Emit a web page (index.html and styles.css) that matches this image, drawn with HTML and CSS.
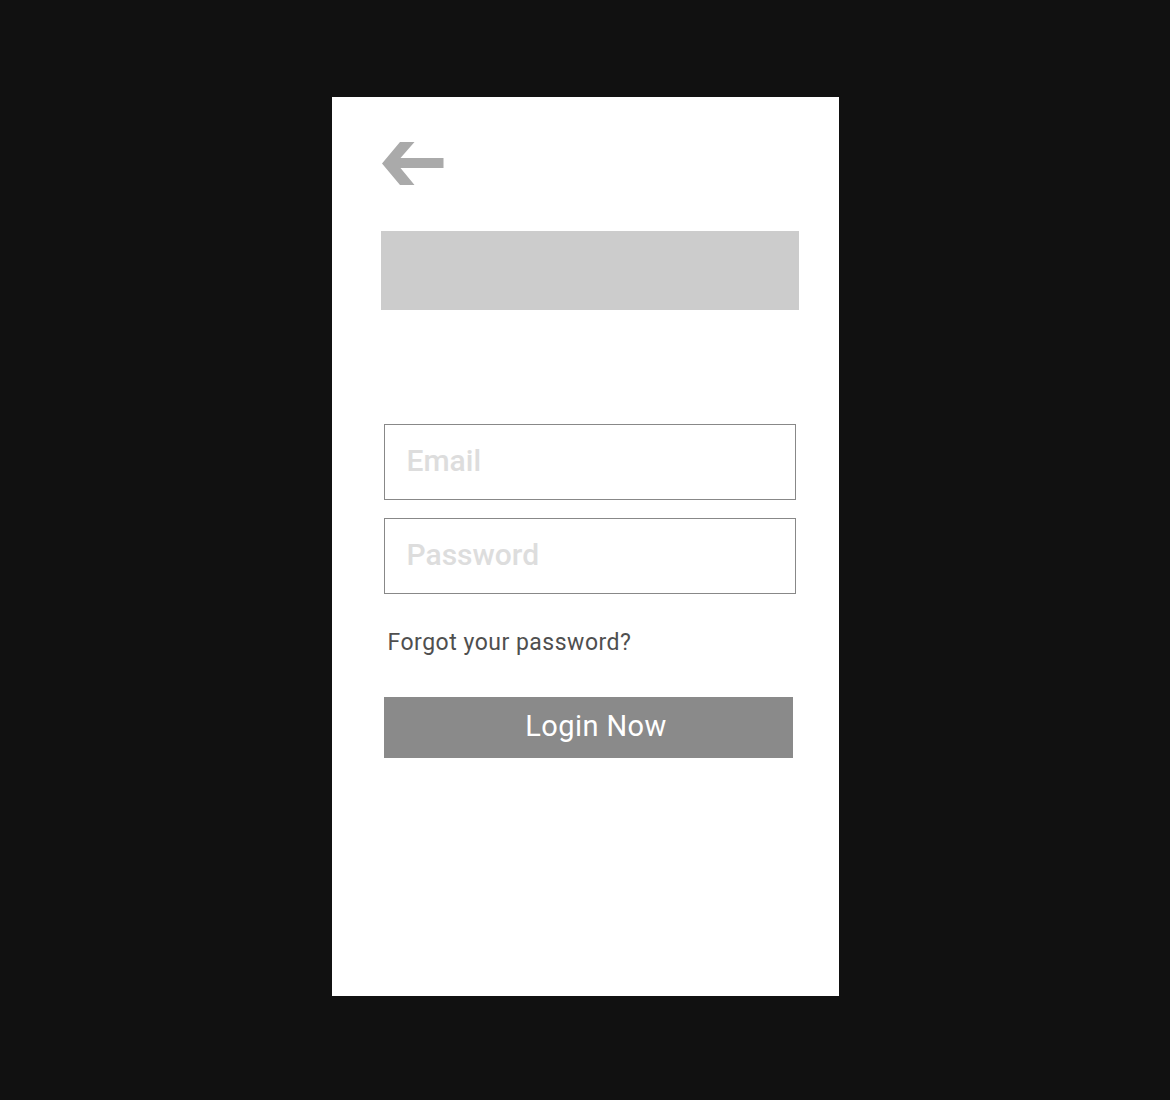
FILE: index.html
```html
<!DOCTYPE html>
<html lang="en">
<head>
<meta charset="utf-8">
<title>Login</title>
<link rel="stylesheet" href="styles.css">
</head>
<body>
<main class="card">
  <button class="back" type="button" aria-label="Back">
    <svg width="62" height="43" viewBox="0 0 62 43"><path d="M0 21.5 L18 0 L32.5 0 L18.5 16 L61.5 16 L61.5 26 L18.5 26 L32.5 43 L18 43 Z" fill="#aaaaaa"/></svg>
  </button>
  <div class="banner"></div>
  <form class="form">
    <input class="field" type="email" placeholder="Email">
    <input class="field" type="password" placeholder="Password">
    <a class="forgot" href="#">Forgot your password?</a>
    <button class="login" type="button">Login Now</button>
  </form>
</main>
</body>
</html>
```
FILE: styles.css
```css
html, body {
  margin: 0;
  padding: 0;
  background: #111111;
}
body {
  font-family: Roboto, "Liberation Sans", sans-serif;
}
.card {
  box-sizing: border-box;
  width: 507px;
  height: 899px;
  margin: 97px auto 0;
  background: #ffffff;
  padding: 45px 40px 0 50px;
  display: flex;
  flex-direction: column;
  align-items: flex-start;
}
.back {
  border: 0;
  padding: 0;
  margin: 0;
  background: none;
  display: block;
  line-height: 0;
}
.back svg {
  display: block;
}
.banner {
  width: 418px;
  height: 79px;
  margin: 46px 0 0 -1px;
  background: #cccccc;
}
.form {
  margin: 114px 0 0 2px;
  display: flex;
  flex-direction: column;
  align-items: flex-start;
}
.field {
  box-sizing: border-box;
  width: 412px;
  height: 76px;
  margin: 0 0 18px;
  border: 1px solid #888888;
  border-radius: 0;
  padding: 0 0 3px 22px;
  font-family: Roboto, "Liberation Sans", sans-serif;
  font-size: 30px;
  font-weight: 500;
  color: #333333;
  outline: none;
  background: #ffffff;
}
.field::placeholder {
  color: #dddddd;
  opacity: 1;
}
.forgot {
  margin: 18px 0 0 4px;
  font-size: 23px;
  font-weight: 400;
  letter-spacing: 0.5px;
  line-height: 26px;
  color: #4f4f4f;
  text-decoration: none;
}
.login {
  margin-top: 41px;
  width: 409px;
  height: 61px;
  border: 0;
  padding: 0 0 2px 16px;
  background: #8a8a8a;
  color: #ffffff;
  font-family: Roboto, "Liberation Sans", sans-serif;
  font-size: 29px;
  font-weight: 400;
  letter-spacing: 0.4px;
  line-height: 59px;
}
```
